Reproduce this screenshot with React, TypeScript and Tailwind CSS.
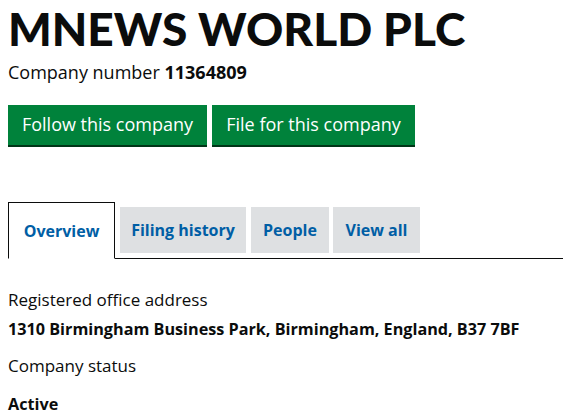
import React from "react";

export default function App() {
  return (
    <div className="min-h-[420px] bg-white px-2 font-['Open_Sans',sans-serif] text-[#0b0c0c] overflow-hidden">
      <h1 className="font-['Lato',sans-serif] text-[46px] font-black leading-[56px] pt-[1px]">MNEWS WORLD PLC</h1>
      <p className="text-[18px] leading-[24px] mt-[3px]">
        Company number <span className="font-bold">11364809</span>
      </p>
      <div className="flex gap-[5px] mt-[21px]">
        <button className="h-[40px] w-[199px] bg-[#00823b] text-white text-[18px] leading-[38px] shadow-[0_2px_0_#003618] pb-[2px]">
          Follow this company
        </button>
        <button className="h-[40px] w-[203px] bg-[#00823b] text-white text-[18px] leading-[38px] shadow-[0_2px_0_#003618] pb-[2px]">
          File for this company
        </button>
      </div>
      <div className="mt-[57px] flex items-end border-b border-[#0b0c0c] w-[600px]">
        <div className="h-[57px] w-[107px] border border-[#0b0c0c] border-b-white -mb-px bg-white flex items-center justify-center text-[16px] font-bold text-[#005ea5]">
          Overview
        </div>
        <div className="ml-[5px] mb-[5px] h-[46px] w-[126px] bg-[#dee0e2] flex items-center justify-center text-[16px] font-bold text-[#005ea5]">
          Filing history
        </div>
        <div className="ml-[5px] mb-[5px] h-[46px] w-[78px] bg-[#dee0e2] flex items-center justify-center text-[16px] font-bold text-[#005ea5]">
          People
        </div>
        <div className="ml-[4px] mb-[5px] h-[46px] w-[87px] bg-[#dee0e2] flex items-center justify-center text-[16px] font-bold text-[#005ea5]">
          View all
        </div>
      </div>
      <div className="mt-[29px] leading-[24px]">
        <p className="text-[17px]">Registered office address</p>
        <p className="text-[16.2px] font-bold mt-[5px]">1310 Birmingham Business Park, Birmingham, England, B37 7BF</p>
        <p className="text-[17px] mt-[13px]">Company status</p>
        <p className="text-[16.2px] font-bold mt-[14px]">Active</p>
      </div>
    </div>
  );
}
